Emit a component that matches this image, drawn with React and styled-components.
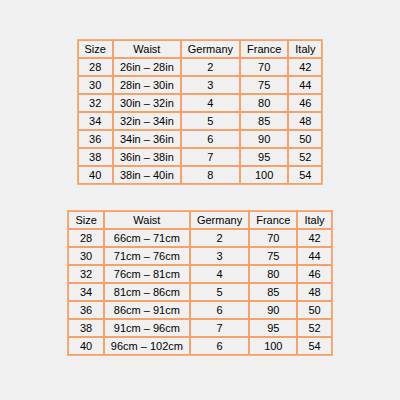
import React from "react";
import styled, { createGlobalStyle } from "styled-components";

const GlobalStyle = createGlobalStyle`
  html, body {
    margin: 0;
    padding: 0;
    background: #f0f0f0;
  }
`;

const Page = styled.div`
  width: 400px;
  height: 400px;
  display: flex;
  flex-direction: column;
  align-items: center;
  padding-top: 39px;
  gap: 25px;
  box-sizing: border-box;
  font-family: "Liberation Sans", Arial, sans-serif;
`;

const Table = styled.table`
  border: 1px solid #f6ae7c;
  border-spacing: 0;
  background: #f0f0f0;
`;

const Cell = styled.td`
  border: 1px solid #f5a26a;
  height: 16px;
  padding: 0 6px;
  font-size: 11px;
  line-height: 16px;
  color: #000;
  text-align: center;
  white-space: nowrap;
`;

const sizes = [28, 30, 32, 34, 36, 38, 40];
const inches = [
  "26in – 28in",
  "28in – 30in",
  "30in – 32in",
  "32in – 34in",
  "34in – 36in",
  "36in – 38in",
  "38in – 40in",
];
const cms = [
  "66cm – 71cm",
  "71cm – 76cm",
  "76cm – 81cm",
  "81cm – 86cm",
  "86cm – 91cm",
  "91cm – 96cm",
  "96cm – 102cm",
];
const france = [70, 75, 80, 85, 90, 95, 100];
const italy = [42, 44, 46, 48, 50, 52, 54];

const SizeTable = ({ waist, germany }) => (
  <Table>
    <tbody>
      <tr>
        <Cell>Size</Cell>
        <Cell>Waist</Cell>
        <Cell>Germany</Cell>
        <Cell>France</Cell>
        <Cell>Italy</Cell>
      </tr>
      {sizes.map((s, i) => (
        <tr key={s}>
          <Cell>{s}</Cell>
          <Cell>{waist[i]}</Cell>
          <Cell>{germany[i]}</Cell>
          <Cell>{france[i]}</Cell>
          <Cell>{italy[i]}</Cell>
        </tr>
      ))}
    </tbody>
  </Table>
);

export default function App() {
  return (
    <>
      <GlobalStyle />
      <Page>
        <SizeTable waist={inches} germany={[2, 3, 4, 5, 6, 7, 8]} />
        <SizeTable waist={cms} germany={[2, 3, 4, 5, 6, 7, 6]} />
      </Page>
    </>
  );
}
